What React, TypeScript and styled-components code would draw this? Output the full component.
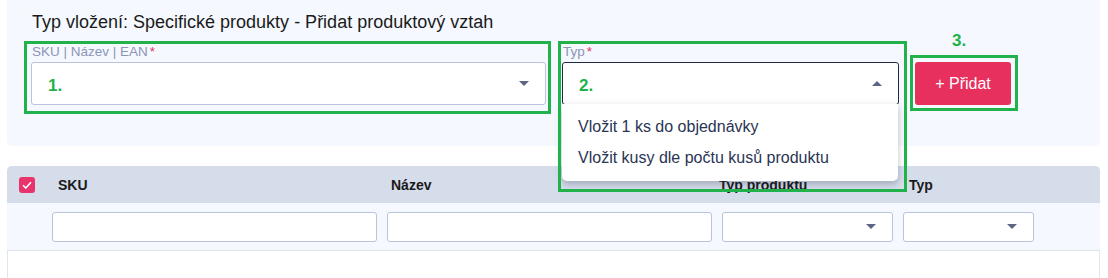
import React from 'react'
import styled, { createGlobalStyle } from 'styled-components'

const GlobalStyle = createGlobalStyle`
  html, body {
    margin: 0;
    padding: 0;
    background: #ffffff;
  }
  body {
    font-family: 'Liberation Sans', Arial, sans-serif;
    color: #1b1b1b;
  }
  * {
    box-sizing: border-box;
  }
`

const green = '#21b24b'

const Page = styled.div`
  padding: 0 8px 0 7px;
  height: 278px;
  overflow: hidden;
`

const FormPanel = styled.section`
  background: #f5f8fe;
  border-radius: 0 0 5px 5px;
  padding: 12px 24px 0;
  height: 146px;
`

const PanelTitle = styled.h2`
  margin: 0 0 0 1px;
  font-size: 18px;
  line-height: 20px;
  font-weight: 400;
  color: #1b1b1b;
`

const FormRow = styled.div`
  display: flex;
  align-items: flex-end;
  gap: 16px;
  margin-top: 12px;
`

const Field = styled.div<{ $width: number }>`
  position: relative;
  width: ${(p) => p.$width}px;
`

const Label = styled.label`
  display: block;
  font-size: 13.5px;
  line-height: 15px;
  color: #8b95b8;
  padding-left: 1px;
  margin-bottom: 3px;

  span {
    color: #e8305f;
    margin-left: 2px;
  }
`

const SelectBox = styled.div<{ $focused?: boolean }>`
  position: relative;
  display: flex;
  align-items: center;
  height: 43px;
  background: #ffffff;
  border: 1px solid ${(p) => (p.$focused ? '#1f2a4b' : '#b9c3da')};
  border-radius: 3px;
  padding: 0 16px;
`

const Caret = styled.i<{ $up?: boolean }>`
  margin-left: auto;
  width: 0;
  height: 0;
  border-left: 5px solid transparent;
  border-right: 5px solid transparent;
  ${(p) =>
    p.$up
      ? 'border-bottom: 5px solid #5e6582;'
      : 'border-top: 5px solid #5e6582;'}
`

const Menu = styled.ul`
  position: absolute;
  z-index: 5;
  left: -1px;
  right: 0;
  top: 100%;
  margin: 0;
  padding: 7px 0 8px;
  list-style: none;
  background: #ffffff;
  border-radius: 0 0 5px 5px;
  box-shadow: 0 3px 7px rgba(30, 40, 70, 0.28);
`

const MenuItem = styled.li`
  height: 31px;
  line-height: 31px;
  padding-left: 16px;
  font-size: 16px;
  color: #2a3555;
`

const AddButton = styled.button`
  width: 96px;
  height: 43px;
  border: none;
  border-radius: 3px;
  background: #e8305f;
  color: #ffffff;
  font-family: 'Liberation Sans', Arial, sans-serif;
  font-size: 16px;
`

const ButtonWrap = styled.div`
  position: relative;
`

const AnnotationFrame = styled.div<{
  $t: number
  $r: number
  $b: number
  $l: number
}>`
  position: absolute;
  z-index: 6;
  top: ${(p) => p.$t}px;
  right: ${(p) => p.$r}px;
  bottom: ${(p) => p.$b}px;
  left: ${(p) => p.$l}px;
  border: 3px solid ${green};
  pointer-events: none;
`

const StepNumber = styled.span`
  font-size: 17px;
  font-weight: 700;
  color: ${green};
  line-height: 1;
  margin-top: 3px;
`

const StepAbove = styled(StepNumber)`
  position: absolute;
  left: 39px;
  top: -26px;
  margin: 0;
`

const Table = styled.div`
  margin-top: 20px;
  border-left: 1px solid #e1e5ed;
  border-right: 1px solid #e1e5ed;
  border-radius: 5px 5px 0 0;
  height: 120px;
`

const TableRow = styled.div<{ $head?: boolean }>`
  display: grid;
  grid-template-columns: 40px 335px 335px 181px 141px 1fr;
  align-items: center;
  height: ${(p) => (p.$head ? 37 : 48)}px;
  background: ${(p) => (p.$head ? '#d5dcea' : '#f5f8fe')};
  border-radius: ${(p) => (p.$head ? '5px 5px 0 0' : '0')};
  border-bottom: ${(p) => (p.$head ? 'none' : '1px solid #dfe3ea')};
  margin: 0 -1px;
`

const HeadCell = styled.div<{ $pad?: number }>`
  padding-left: ${(p) => p.$pad ?? 11}px;
  font-size: 14px;
  font-weight: 700;
  color: #1a1a1a;
`

const FilterCell = styled.div`
  padding: 0 5px;
`

const Checkbox = styled.span`
  display: flex;
  align-items: center;
  justify-content: center;
  width: 16px;
  height: 16px;
  margin-left: 12px;
  border-radius: 3px;
  background: #e8336b;
`

const FilterInput = styled.div`
  height: 30px;
  background: #ffffff;
  border: 1px solid #b9c3da;
  border-radius: 3px;
`

const FilterSelect = styled(FilterInput)`
  display: flex;
  align-items: center;
  padding: 0 16px;
`

const App: React.FC = () => {
  return (
    <Page>
      <GlobalStyle />
      <FormPanel>
        <PanelTitle>Typ vložení: Specifické produkty - Přidat produktový vztah</PanelTitle>
        <FormRow>
          <Field $width={515}>
            <Label>
              SKU | Název | EAN<span>*</span>
            </Label>
            <SelectBox>
              <StepNumber>1.</StepNumber>
              <Caret />
            </SelectBox>
            <AnnotationFrame $t={-3} $r={-5} $b={-9} $l={-7} />
          </Field>
          <Field $width={337}>
            <Label>
              Typ<span>*</span>
            </Label>
            <SelectBox $focused>
              <StepNumber>2.</StepNumber>
              <Caret $up />
              <Menu>
                <MenuItem>Vložit 1 ks do objednávky</MenuItem>
                <MenuItem>Vložit kusy dle počtu kusů produktu</MenuItem>
              </Menu>
            </SelectBox>
            <AnnotationFrame $t={-3} $r={-8} $b={-87} $l={-4} />
          </Field>
          <ButtonWrap>
            <AddButton>+ Přidat</AddButton>
            <AnnotationFrame $t={-7} $r={-7} $b={-6} $l={-5}>
              <StepAbove>3.</StepAbove>
            </AnnotationFrame>
          </ButtonWrap>
        </FormRow>
      </FormPanel>
      <Table>
        <TableRow $head>
          <Checkbox>
            <svg width="10" height="8" viewBox="0 0 10 8">
              <path d="M1 4.2 L3.8 7 L9 1.2" fill="none" stroke="#fff" strokeWidth="1.6" />
            </svg>
          </Checkbox>
          <HeadCell>SKU</HeadCell>
          <HeadCell $pad={9}>Název</HeadCell>
          <HeadCell $pad={2}>Typ produktu</HeadCell>
          <HeadCell>Typ</HeadCell>
          <div />
        </TableRow>
        <TableRow>
          <div />
          <FilterCell>
            <FilterInput />
          </FilterCell>
          <FilterCell>
            <FilterInput />
          </FilterCell>
          <FilterCell>
            <FilterSelect>
              <Caret />
            </FilterSelect>
          </FilterCell>
          <FilterCell>
            <FilterSelect>
              <Caret />
            </FilterSelect>
          </FilterCell>
          <div />
        </TableRow>
      </Table>
    </Page>
  )
}

export default App
